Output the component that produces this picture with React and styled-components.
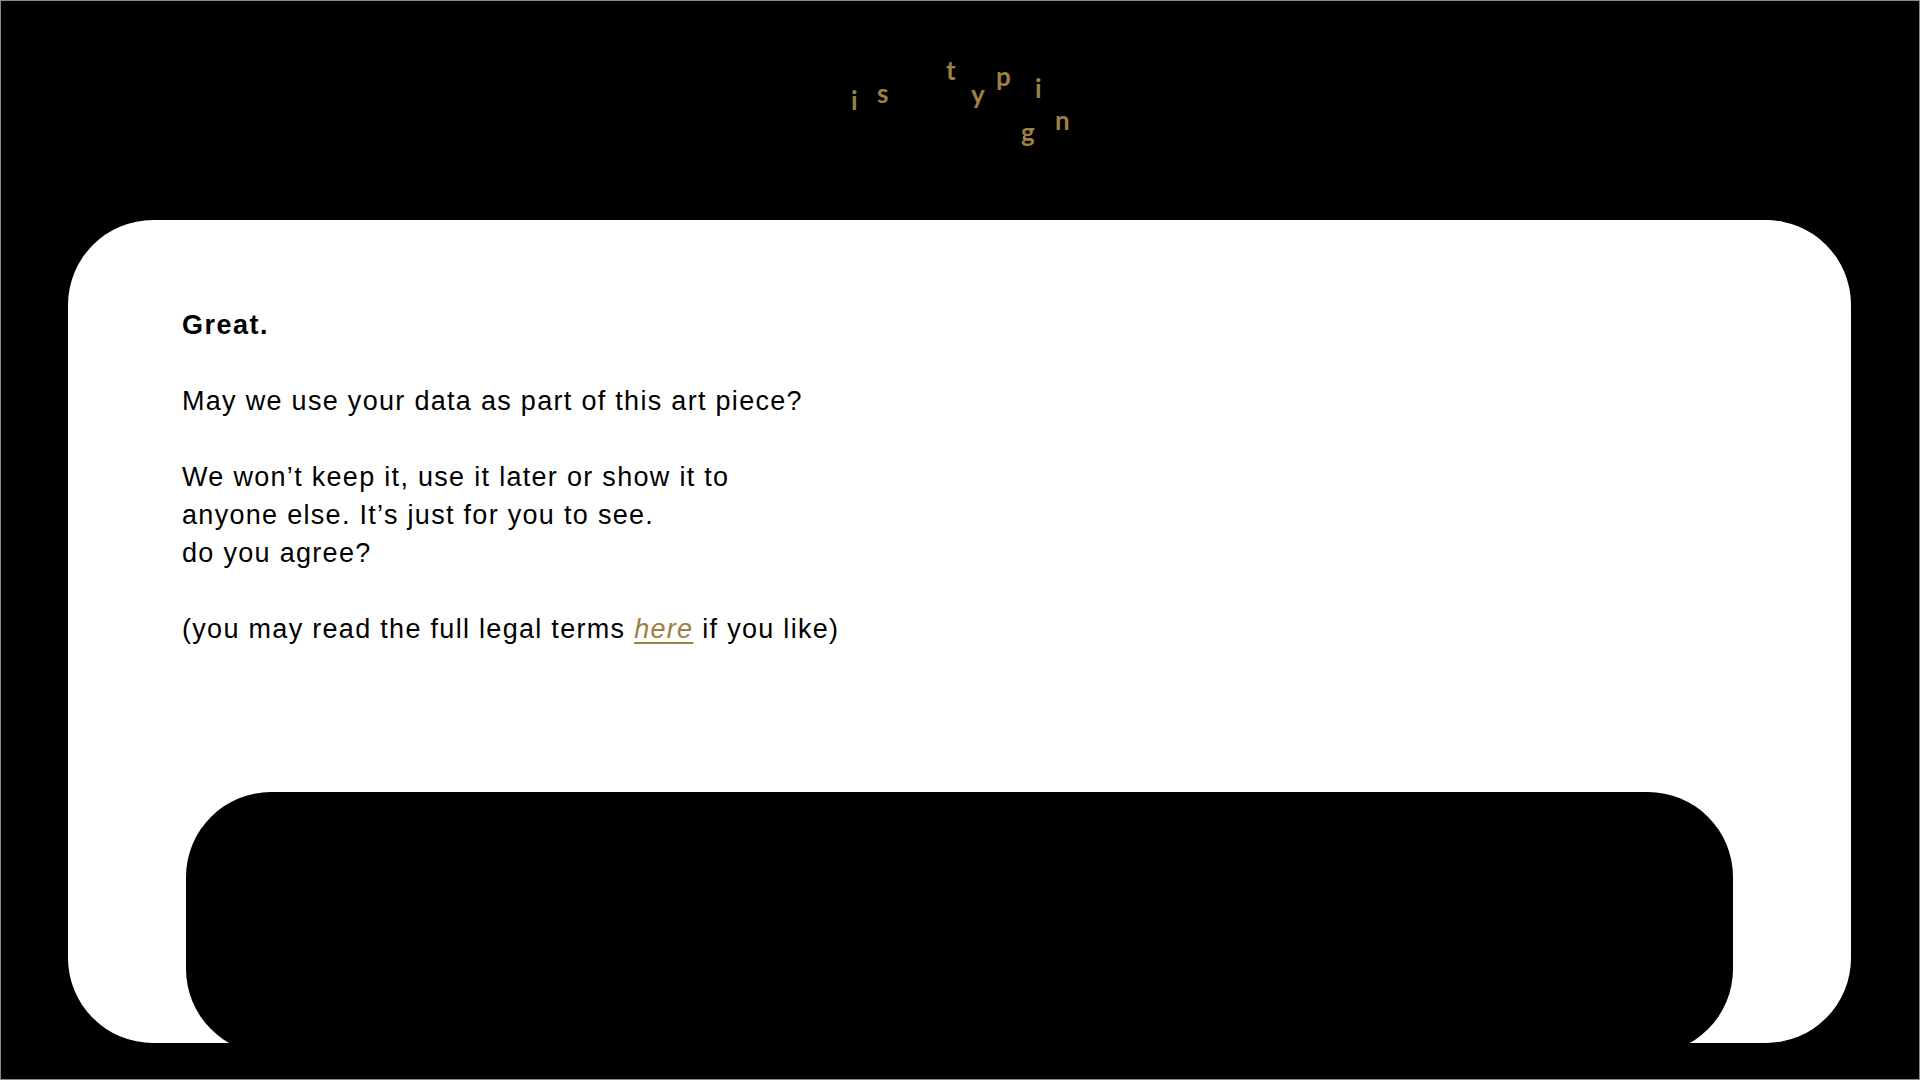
import React from 'react';
import styled, { createGlobalStyle } from 'styled-components';

const GOLD = '#9e8042';

const GlobalStyle = createGlobalStyle`
  html, body {
    margin: 0;
    padding: 0;
    background: #000;
  }
  body {
    font-family: "Liberation Sans", Arial, Helvetica, sans-serif;
  }
`;

// scattered letters of the "is typing" indicator, offsets inside a 240px box
const TYPING = [
  { ch: 'i', x: 11, y: 87 },
  { ch: 's', x: 37, y: 80 },
  { ch: 't', x: 106, y: 57 },
  { ch: 'y', x: 131, y: 81 },
  { ch: 'p', x: 156, y: 63 },
  { ch: 'i', x: 195, y: 75 },
  { ch: 'g', x: 181, y: 119 },
  { ch: 'n', x: 215, y: 107 },
];

const App = () => {
  return (
    <>
      <GlobalStyle />
      <Page>
        <Header>
          <Typing aria-label="is typing">
            {TYPING.map((l, i) => (
              <Letter key={i} $x={l.x} $y={l.y}>{l.ch}</Letter>
            ))}
          </Typing>
        </Header>

        <Card>
          <Copy>
            <Para><strong>Great.</strong></Para>
            <Para>May we use your data as part of this art piece?</Para>
            <Para>
              We won’t keep it, use it later or show it to<br />
              anyone else. It’s just for you to see.<br />
              do you agree?
            </Para>
            <Para>
              (you may read the full legal terms <Link href="#">here</Link> if you like)
            </Para>
          </Copy>
          <Tray />
        </Card>
      </Page>
    </>
  );
};

const Page = styled.div`
  width: 100vw;
  height: 100vh;
  box-sizing: border-box;
  display: flex;
  flex-direction: column;
  background: #000;
  box-shadow: inset 0 0 0 1px #8a8a8a;
  overflow: hidden;
`;

const Header = styled.header`
  height: 220px;
  flex-shrink: 0;
  display: flex;
  justify-content: center;
`;

const Typing = styled.div`
  position: relative;
  width: 240px;
  height: 100%;
`;

const Letter = styled.span`
  position: absolute;
  left: ${p => p.$x}px;
  top: ${p => p.$y}px;
  font-family: Lato, "Open Sans", sans-serif;
  font-size: 26px;
  font-weight: 700;
  line-height: 1;
  color: ${GOLD};
`;

const Card = styled.main`
  flex: 1;
  margin: 0 69px 37px 68px;
  background: #fff;
  border-radius: 85px;
  padding: 86px 118px 0 114px;
  display: flex;
  flex-direction: column;
  min-height: 0;
`;

const Copy = styled.div`
  color: #000;
  font-size: 27px;
  line-height: 38px;
  letter-spacing: 1.3px;
`;

const Para = styled.p`
  margin: 0 0 38px;
  strong {
    font-weight: 700;
    letter-spacing: 1.5px;
  }
`;

const Link = styled.a`
  color: ${GOLD};
  font-style: italic;
  text-decoration: underline;
  text-underline-offset: 4px;
`;

const Tray = styled.div`
  margin-top: auto;
  margin-left: 4px;
  margin-bottom: -11px;
  height: 262px;
  background: #000;
  border-radius: 85px;
`;

export default App;
